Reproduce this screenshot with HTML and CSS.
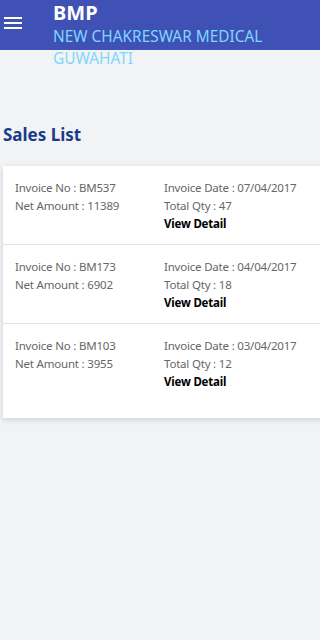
FILE: index.html
```html
<!DOCTYPE html>
<html lang="en">
<head>
    <meta charset="UTF-8">
    <meta name="viewport" content="width=device-width, initial-scale=1.0">
    <title>BMP - Sales List</title>
    <link rel="stylesheet" href="styles.css">
</head>
<body>
    <header class="topbar">
        <button class="menu-btn" aria-label="menu">
            <span></span><span></span><span></span>
        </button>
        <div class="brand">
            <div class="brand-title">BMP</div>
            <div class="brand-sub">NEW CHAKRESWAR MEDICAL GUWAHATI</div>
        </div>
    </header>

    <main class="content">
        <h1 class="page-title">Sales List</h1>

        <div class="sales-card">
            <div class="sale-row">
                <div class="col">
                    <div>Invoice No : BM537</div>
                    <div>Net Amount : 11389</div>
                </div>
                <div class="col">
                    <div>Invoice Date : 07/04/2017</div>
                    <div>Total Qty : 47</div>
                    <a class="detail" href="#">View Detail</a>
                </div>
            </div>
            <div class="sale-row">
                <div class="col">
                    <div>Invoice No : BM173</div>
                    <div>Net Amount : 6902</div>
                </div>
                <div class="col">
                    <div>Invoice Date : 04/04/2017</div>
                    <div>Total Qty : 18</div>
                    <a class="detail" href="#">View Detail</a>
                </div>
            </div>
            <div class="sale-row">
                <div class="col">
                    <div>Invoice No : BM103</div>
                    <div>Net Amount : 3955</div>
                </div>
                <div class="col">
                    <div>Invoice Date : 03/04/2017</div>
                    <div>Total Qty : 12</div>
                    <a class="detail" href="#">View Detail</a>
                </div>
            </div>
        </div>
    </main>
</body>
</html>
```

FILE: styles.css
```css
* {
    margin: 0;
    padding: 0;
    box-sizing: border-box;
}

body {
    font-family: "Noto Sans", "Open Sans", sans-serif;
    background: #f2f3f5;
    min-height: 100vh;
    overflow: hidden;
}

.topbar {
    height: 50px;
    background: #3f51b5;
    display: flex;
    align-items: flex-start;
}

.menu-btn {
    flex: none;
    width: 53px;
    height: 50px;
    border: none;
    background: none;
    display: flex;
    flex-direction: column;
    gap: 3px;
    padding: 17px 0 0 4px;
}

.menu-btn span {
    display: block;
    width: 18px;
    height: 2px;
    background: #fff;
}

.brand {
    width: 240px;
    padding-top: 1px;
}

.brand-title {
    color: #fff;
    font-size: 20px;
    font-weight: bold;
    line-height: 23px;
    margin-bottom: 2px;
}

.brand-sub {
    color: #7fd6ff;
    font-size: 15.4px;
    line-height: 22px;
}

.content {
    padding: 73px 0 0 3px;
}

.page-title {
    color: #1a3a8c;
    font-size: 17px;
    font-weight: bold;
    line-height: 24px;
}

.sales-card {
    margin-top: 19px;
    margin-right: -20px;
    background: #fff;
    box-shadow: 0 2px 6px rgba(0, 0, 0, 0.15);
    padding-bottom: 16px;
}

.sale-row {
    display: flex;
    padding: 13px 0 11px 12px;
    border-bottom: 1px solid #e2e2e2;
    font-size: 11.5px;
    letter-spacing: -0.2px;
    line-height: 18px;
    color: #666;
}

.sale-row:last-child {
    border-bottom: none;
}

.col {
    width: 149px;
}

.detail {
    display: block;
    color: #000;
    font-weight: bold;
    text-decoration: none;
}
```
